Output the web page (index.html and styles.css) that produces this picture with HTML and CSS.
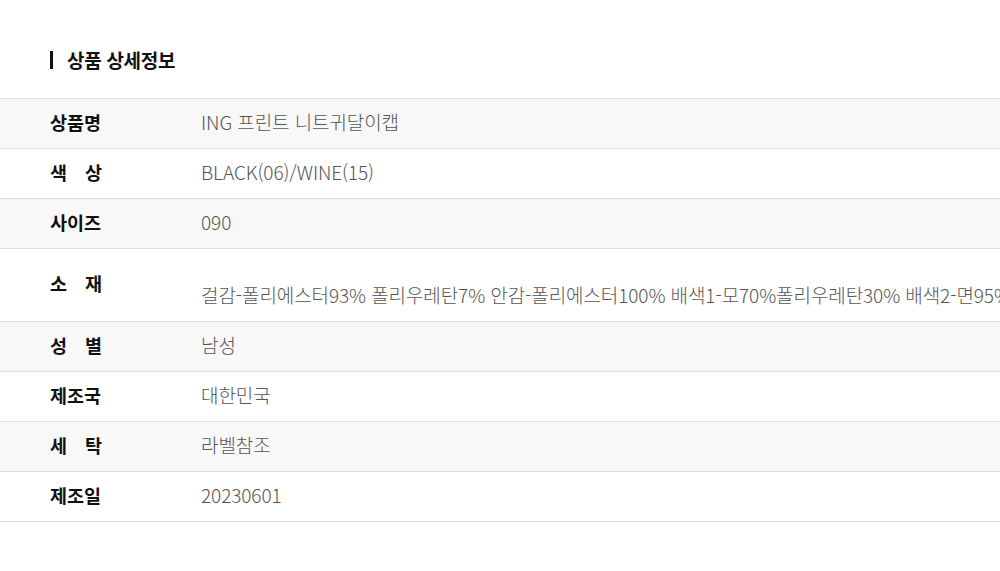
FILE: index.html
```html
<!DOCTYPE html>
<html lang="ko">
<head>
<meta charset="utf-8">
<link rel="stylesheet" href="styles.css">
</head>
<body>
<section class="detail">
  <h2 class="title">상품 상세정보</h2>
  <div class="table">
    <div class="row grey"><div class="label"><span>상품명</span></div><div class="value">ING 프린트 니트귀달이캡</div></div>
    <div class="row"><div class="label"><span>색 상</span></div><div class="value">BLACK(06)/WINE(15)</div></div>
    <div class="row grey"><div class="label"><span>사이즈</span></div><div class="value">090</div></div>
    <div class="row tall"><div class="label"><span>소 재</span></div><div class="value low">걸감-폴리에스터93% 폴리우레탄7% 안감-폴리에스터100% 배색1-모70%폴리우레탄30% 배색2-면95%폴리우레탄5%</div></div>
    <div class="row grey"><div class="label"><span>성 별</span></div><div class="value">남성</div></div>
    <div class="row"><div class="label"><span>제조국</span></div><div class="value">대한민국</div></div>
    <div class="row grey"><div class="label"><span>세 탁</span></div><div class="value">라벨참조</div></div>
    <div class="row"><div class="label"><span>제조일</span></div><div class="value">20230601</div></div>
  </div>
</section>
</body>
</html>
```
FILE: styles.css
```css
html, body {
  margin: 0;
  padding: 0;
  background: #fff;
  overflow: hidden;
}
body {
  font-family: "Noto Sans CJK KR", "Noto Sans", sans-serif;
  color: #111;
}
.detail {
  padding-top: 51px;
}
.title {
  margin: 0 0 29px 50px;
  padding-left: 14px;
  border-left: 3px solid #111;
  font-size: 19px;
  font-weight: 700;
  line-height: 18px;
  height: 18px;
  display: flex;
  align-items: center;
  letter-spacing: -0.3px;
}
.table {
  border-top: 1px solid #ddd;
}
.row {
  display: flex;
  align-items: center;
  box-sizing: border-box;
  height: 50px;
  padding-bottom: 4px;
  border-bottom: 1px solid #ddd;
  white-space: nowrap;
}
.row.grey {
  background: #f8f8f8;
}
.row.tall {
  height: 73px;
}
.label {
  width: 201px;
  padding-left: 50px;
  flex: none;
  box-sizing: border-box;
}
.label span {
  display: inline-block;
  width: 52px;
  text-align: justify;
  text-align-last: justify;
  font-size: 18.5px;
  font-weight: 700;
  color: #111;
}
.value {
  font-size: 19px;
  font-weight: 300;
  color: #555;
  letter-spacing: -0.1px;
}
.value.low {
  padding-top: 22px;
}
```
